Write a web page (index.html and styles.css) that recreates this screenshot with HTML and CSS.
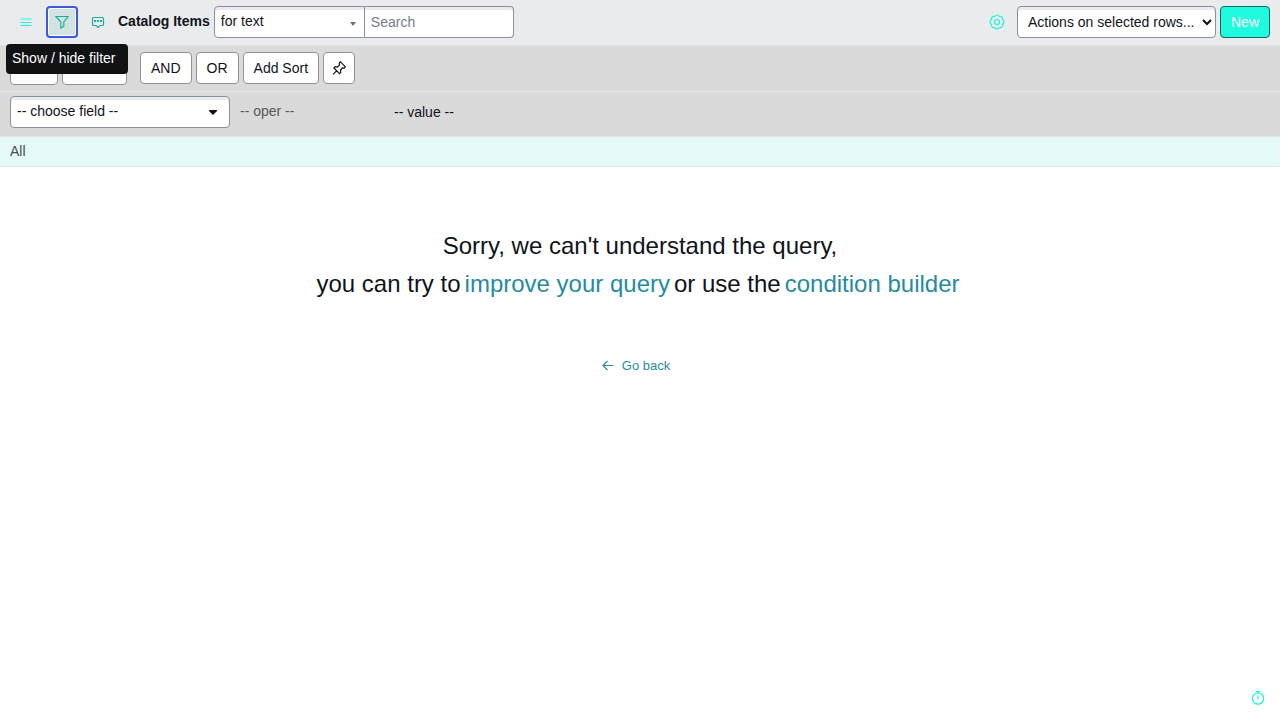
FILE: index.html
```html
<!DOCTYPE html>
<html lang="en">
<head>
<meta charset="utf-8">
<title>Catalog Items</title>
<link rel="stylesheet" href="styles.css">
</head>
<body>
<header class="toolbar">
  <div class="group icons">
    <button class="icon-btn mint" aria-label="Menu"><svg width="16" height="16" viewBox="0 0 16 16"><path d="M2.500 5h11M2.500 8.500h11M2.500 11.500h11"/></svg></button>
    <div class="tip-anchor">
      <button class="icon-btn focused" aria-label="Filter" aria-describedby="tip"><svg width="16" height="16" viewBox="0 0 16 16"><path d="M2 2.500h12L9.800 8v4.300L6.800 14V8z"/></svg></button>
      <div class="tooltip" id="tip" role="tooltip">Show / hide filter</div>
    </div>
    <button class="icon-btn teal" aria-label="Activity stream"><svg width="16" height="16" viewBox="0 0 16 16"><path d="M3.500 3.500h9q1 0 1 1v6q0 1-1 1H10l-2 2-2-2H3.500q-1 0-1-1v-6q0-1 1-1z"/><path class="solid" d="M4 6h2v2H4zM7 6h2v2H7zM10 6h2v2h-2z"/></svg></button>
  </div>
  <h1 class="title">Catalog Items</h1>
  <div class="search">
    <button class="field combo" aria-haspopup="listbox"><span>for text</span><svg class="small-caret" width="6" height="4" viewBox="0 0 6 4"><path d="M0 0h6L3 4z"/></svg></button>
    <input class="field search-input" type="search" placeholder="Search" aria-label="Search">
  </div>
  <div class="actions">
    <button class="icon-btn mint" aria-label="Settings"><svg width="16" height="16" viewBox="0 0 16 16"><path d="M13.500 5.700A2.500 2.500 0 0 1 13.500 10.300A2.500 2.500 0 0 1 10.300 13.500A2.500 2.500 0 0 1 5.700 13.500A2.500 2.500 0 0 1 2.500 10.300A2.500 2.500 0 0 1 2.500 5.700A2.500 2.500 0 0 1 5.700 2.500A2.500 2.500 0 0 1 10.300 2.500A2.500 2.500 0 0 1 13.500 5.700z"/><circle cx="8" cy="8" r="2.500"/></svg></button>
    <select class="field action-select" aria-label="Actions on selected rows"><option>Actions on selected rows...</option></select>
    <button class="btn primary">New</button>
  </div>
</header>
<main>
  <section class="filter" aria-label="Filter">
    <div class="filter-actions">
      <button class="btn low" aria-label="Run"></button>
      <button class="btn low save" aria-label="Save"></button>
      <span class="divider"></span>
      <button class="btn">AND</button>
      <button class="btn">OR</button>
      <button class="btn">Add Sort</button>
      <button class="btn pin" aria-label="Pin filter"><svg width="16" height="16" viewBox="0 0 16 16"><path d="M9.300 1.700l5 5-1 1.300-1.800-.2-2 2.200.3 2.300-1.300 1.300-5.600-5.600 1.300-1.300 2.300.3 2-2.200-.2-1.800zM5.600 10.800L2 14.400"/></svg></button>
    </div>
    <div class="condition">
      <button class="field chooser" aria-haspopup="listbox"><span>-- choose field --</span><svg width="8" height="5" viewBox="0 0 8 5"><path d="M0 0h8v1L4 5 0 1z"/></svg></button>
      <span class="oper">-- oper --</span>
      <span class="value">-- value --</span>
    </div>
  </section>
  <nav class="crumbs" aria-label="Breadcrumb"><a class="crumb" href="#">All</a></nav>
  <section class="message">
    <p class="line">Sorry, we can't understand the query,</p>
    <p class="line links"><span>you can try to</span><a href="#">improve your query</a><span>or use the</span><a href="#">condition builder</a></p>
    <a class="back" href="#"><svg width="12" height="12" viewBox="0 0 12 12"><path d="M11.500 5.500H1M5.500 1L1 5.500 5.500 10"/></svg>Go back</a>
  </section>
</main>
<button class="timer" aria-label="Response time"><svg width="16" height="16" viewBox="0 0 16 16"><circle cx="8" cy="8.500" r="5.700"/><path d="M6 1.500h4M8 1.500v1.500M8 5.500v4"/></svg></button>
</body>
</html>
```
FILE: styles.css
```css
* { box-sizing: border-box; }
body {
  margin: 0 8px 0 0;
  background: #fff;
  color: #10131a;
  font: 14px/20px "Liberation Sans", Arial, sans-serif;
}
button, input, select { font: inherit; color: inherit; margin: 0; }
a { color: #278b9d; text-decoration: none; }
svg { display: block; flex: none; fill: none; stroke: currentColor; stroke-width: 1.2; }
.toolbar {
  display: flex;
  align-items: center;
  gap: 4px;
  height: 46px;
  padding: 0 10px 1px;
  background: #e9ebed;
  border-bottom: 1px solid #dfe1e3;
}
.icons { display: flex; gap: 4px; }
.icon-btn {
  display: flex;
  align-items: center;
  justify-content: center;
  width: 32px;
  height: 32px;
  padding: 0;
  border: 0;
  border-radius: 4px;
  background: transparent;
}
.mint { color: #1ff5dc; }
.teal { color: #1fae9e; }
.focused {
  color: #1fae9e;
  background: #d3e3e1;
  border: 2px solid #3c59e0;
  box-shadow: inset 0 0 0 1px #fff;
}
.solid { fill: currentColor; stroke: none; }
.tip-anchor { position: relative; }
.tooltip {
  position: absolute;
  z-index: 2;
  top: 38px;
  left: -40px;
  width: 122px;
  height: 30px;
  padding: 4px 6px;
  border-radius: 4px;
  background: #101214;
  color: #fff;
  white-space: nowrap;
}
.title { margin: 0; padding-bottom: 2px; font-size: 14px; line-height: 20px; white-space: nowrap; }
.search { display: flex; }
.field {
  height: 32px;
  border: 1px solid #8b8fa0;
  border-radius: 4px;
  background: #fff;
  box-shadow: inset 0 3px 0 #e9eaee;
}
.combo, .chooser { display: flex; align-items: center; justify-content: space-between; text-align: left; }
.combo { width: 151px; padding: 0 8px 2px 6px; border-radius: 4px 0 0 4px; }
.small-caret { margin-top: 5px; color: #6b7083; }
.small-caret path, .chooser path { fill: currentColor; stroke: none; }
.search-input { width: 149px; padding: 0 6px; border-left: 0; border-radius: 0 4px 4px 0; appearance: none; outline: 0; }
.search-input::placeholder { color: #757a89; opacity: 1; }
.actions { display: flex; gap: 4px; margin-left: auto; }
.action-select { width: 199px; padding: 0 0 0 6px; }
.btn {
  height: 32px;
  padding: 0 10px;
  border: 1px solid #909396;
  border-radius: 4px;
  background: #fff;
  white-space: nowrap;
}
.primary { background: #1ffbdf; border-color: #17655e; color: #fff; }
.filter { background: #dadada; }
.filter-actions {
  display: flex;
  align-items: center;
  gap: 4px;
  height: 46px;
  padding: 0 10px 1px;
  border-bottom: 1px solid #e6e8ea;
}
.low { width: 48px; margin-top: 2px; }
.save { width: 65px; }
.divider { width: 1px; height: 16px; margin: 0 4px 0 0; background: #d6d8da; }
.pin { width: 32px; padding: 0 7px; }
.condition { display: flex; align-items: center; height: 44px; padding: 0 10px 4px; }
.chooser { width: 220px; padding: 0 12px 0 6px; }
.chooser span, .oper { padding-bottom: 2px; }
.oper { width: 154px; margin-left: 10px; color: #55585d; }
.crumbs {
  height: 31px;
  padding: 4px 10px;
  background: #e5faf8;
  border-top: 1px solid #dfe3e5;
  border-bottom: 1px solid #dfe3e5;
}
.crumb { color: #464c56; }
.message { display: flex; flex-direction: column; align-items: center; padding-top: 60px; }
.line { margin: 0; font-size: 24px; line-height: 38px; }
.links { display: flex; gap: 4px; padding-right: 4px; }
.back { display: flex; align-items: center; gap: 8px; margin-top: 53px; padding-right: 8px; font-size: 13px; }
.timer {
  position: fixed;
  right: 22px;
  bottom: 12px;
  padding: 0;
  border: 0;
  background: transparent;
  color: #1ff5dc;
}
```
